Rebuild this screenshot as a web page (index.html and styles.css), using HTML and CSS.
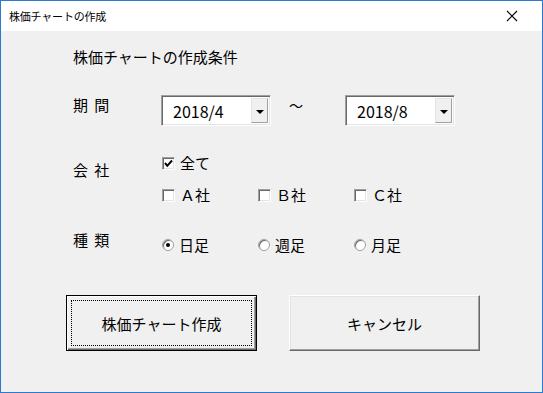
FILE: index.html
```html
<!DOCTYPE html>
<html>
  <head>
    <title>株価チャートの作成</title>
    <link rel="stylesheet" href="styles.css">
  </head>
  <body>
    <div class="window">
      <div class="titlebar">
        <span class="title">株価チャートの作成</span>
        <svg class="close" width="12" height="12" viewBox="0 0 12 12">
          <path d="M1 1 L11 11 M11 1 L1 11" stroke="#000" stroke-width="1.1" fill="none" />
        </svg>
      </div>

      <div class="content">
        <div class="heading">株価チャートの作成条件</div>

        <div class="row period">
          <div class="label">期 間</div>
          <div class="combo">
            <span class="combo-text">2018/4</span>
            <span class="combo-btn"><span class="arrow"></span></span>
          </div>
          <span class="tilde">～</span>
          <div class="combo">
            <span class="combo-text">2018/8</span>
            <span class="combo-btn"><span class="arrow"></span></span>
          </div>
        </div>

        <div class="row company">
          <div class="label label-company">会 社</div>
          <div class="checks">
            <label class="opt opt-all">
              <span class="box">
                <svg width="9" height="9" viewBox="0 0 9 9">
                  <path d="M1 4 L3.3 6.8 L8 1.5" stroke="#000" stroke-width="2" fill="none" />
                </svg>
              </span>
              全て
            </label>
            <div class="opt-grid">
              <label class="opt"><span class="box"></span>Ａ社</label>
              <label class="opt"><span class="box"></span>Ｂ社</label>
              <label class="opt"><span class="box"></span>Ｃ社</label>
            </div>
          </div>
        </div>

        <div class="row kind">
          <div class="label">種 類</div>
          <div class="opt-grid radios">
            <label class="opt"><span class="radio checked"></span>日足</label>
            <label class="opt"><span class="radio"></span>週足</label>
            <label class="opt"><span class="radio"></span>月足</label>
          </div>
        </div>

        <div class="buttons">
          <button class="btn btn-default"><span class="focus">株価チャート作成</span></button>
          <button class="btn">キャンセル</button>
        </div>
      </div>
    </div>
  </body>
</html>
```

FILE: styles.css
```css
/* dialog styles */
body {
  margin: 0;
  font-family: "Noto Sans CJK JP", "Noto Sans", sans-serif;
  color: #000;
}

.window {
  width: 543px;
  height: 393px;
  box-sizing: border-box;
  border: 1px solid #2b7ad0;
  background-color: #f0f0f0;
}

.titlebar {
  height: 30px;
  background-color: #fff;
  display: flex;
  align-items: center;
  justify-content: space-between;
  padding: 0 24px 0 8px;
}

.title {
  font-size: 11px;
  letter-spacing: -0.2px;
}

.content {
  padding: 16px 0 0 72px;
}

.heading {
  font-size: 15px;
  line-height: 20px;
}

.row {
  display: flex;
  align-items: flex-start;
  font-size: 15px;
  line-height: 20px;
}

.label {
  width: 88px;
  flex-shrink: 0;
  word-spacing: 3px;
}

.period {
  margin-top: 28px;
}

.combo {
  width: 110px;
  height: 31px;
  box-sizing: border-box;
  background-color: #fff;
  border-top: 1px solid #a0a0a0;
  border-left: 1px solid #a0a0a0;
  border-bottom: 1px solid #fff;
  border-right: 1px solid #fff;
  box-shadow: inset 1px 1px #696969, inset -1px -1px #e3e3e3;
  display: flex;
  align-items: center;
  justify-content: space-between;
  padding: 2px;
}

.combo-text {
  padding-left: 9px;
  font-size: 16px;
}

.combo-btn {
  width: 17px;
  height: 100%;
  box-sizing: border-box;
  background-color: #f0f0f0;
  border-top: 1px solid #e3e3e3;
  border-left: 1px solid #e3e3e3;
  border-right: 1px solid #a0a0a0;
  border-bottom: 1px solid #a0a0a0;
  display: flex;
  align-items: center;
  justify-content: center;
}

.arrow {
  width: 0;
  height: 0;
  border-left: 4px solid transparent;
  border-right: 4px solid transparent;
  border-top: 4px solid #000;
  margin-top: 2px;
}

.tilde {
  margin: 0 42px 0 18px;
  font-size: 14px;
}

.company {
  margin-top: 27px;
}

.label-company {
  padding-top: 7px;
}

.opt {
  display: flex;
  align-items: center;
  font-size: 15px;
  line-height: 20px;
}

.opt-grid {
  display: grid;
  grid-template-columns: 96px 96px 96px;
  margin-top: 12px;
}

.box {
  width: 13px;
  height: 13px;
  box-sizing: border-box;
  background-color: #fff;
  border-top: 1px solid #a0a0a0;
  border-left: 1px solid #a0a0a0;
  border-bottom: 1px solid #fff;
  border-right: 1px solid #fff;
  box-shadow: inset 1px 1px #696969, inset -1px -1px #e3e3e3;
  margin: 0 5px 0 1px;
  display: flex;
  align-items: center;
  justify-content: center;
}

.kind {
  margin-top: 25px;
}

.radios {
  margin-top: 5px;
}

.radio {
  width: 12px;
  height: 12px;
  box-sizing: border-box;
  border-radius: 50%;
  background-color: #fff;
  border: 1px solid #a0a0a0;
  box-shadow: inset 1px 1px #696969;
  margin: 0 5px 0 1px;
  position: relative;
}

.radio.checked::after {
  content: "";
  position: absolute;
  left: 3px;
  top: 3px;
  width: 4px;
  height: 4px;
  border-radius: 50%;
  background-color: #000;
}

.buttons {
  display: flex;
  gap: 32px;
  margin: 40px 0 0 -7px;
}

.btn {
  width: 191px;
  height: 56px;
  box-sizing: border-box;
  font-family: "Noto Sans CJK JP", "Noto Sans", sans-serif;
  font-size: 15px;
  background-color: #f0f0f0;
  border-top: 1px solid #fff;
  border-left: 1px solid #fff;
  border-right: 1px solid #696969;
  border-bottom: 1px solid #696969;
  box-shadow: inset -1px -1px #a0a0a0, inset 1px 1px #e3e3e3;
  padding: 0;
  color: #000;
}

.btn-default {
  border: 1px solid #000;
  box-shadow: inset 1px 1px #fff, inset -1px -1px #696969, inset -2px -2px #a0a0a0;
  padding: 4px;
  display: flex;
}

.focus {
  flex: 1;
  border: 1px dotted #000;
  display: flex;
  align-items: center;
  justify-content: center;
}
```
